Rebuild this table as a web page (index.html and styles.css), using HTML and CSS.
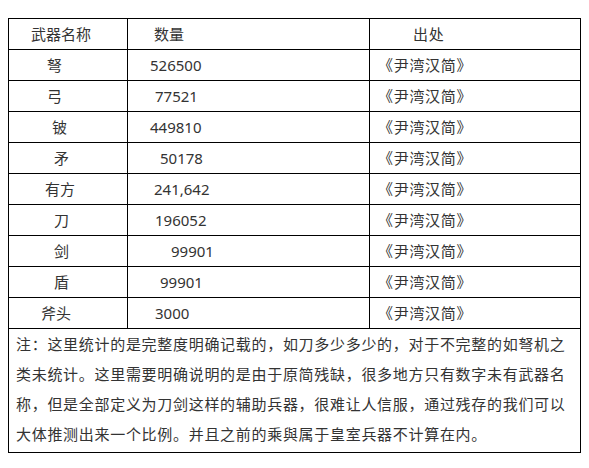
FILE: index.html
```html
<!DOCTYPE html>
<html lang="zh-CN">
<head>
<meta charset="utf-8">
<link rel="stylesheet" href="styles.css">
</head>
<body>
<div class="sheet">
  <div class="cell c1 p22">武器名称</div>
  <div class="cell c2 p26">数量</div>
  <div class="cell c3 h">出处</div>

  <div class="cell c1 p38">弩</div>
  <div class="cell c2 num p22">526500</div>
  <div class="cell c3">《尹湾汉简》</div>

  <div class="cell c1 p38">弓</div>
  <div class="cell c2 num p27">77521</div>
  <div class="cell c3">《尹湾汉简》</div>

  <div class="cell c1 p43">铍</div>
  <div class="cell c2 num p22">449810</div>
  <div class="cell c3">《尹湾汉简》</div>

  <div class="cell c1 p45">矛</div>
  <div class="cell c2 num p32">50178</div>
  <div class="cell c3">《尹湾汉简》</div>

  <div class="cell c1 p36">有方</div>
  <div class="cell c2 num p26">241,642</div>
  <div class="cell c3">《尹湾汉简》</div>

  <div class="cell c1 p45">刀</div>
  <div class="cell c2 num p27">196052</div>
  <div class="cell c3">《尹湾汉简》</div>

  <div class="cell c1 p45">剑</div>
  <div class="cell c2 num p43">99901</div>
  <div class="cell c3">《尹湾汉简》</div>

  <div class="cell c1 p45">盾</div>
  <div class="cell c2 num p32">99901</div>
  <div class="cell c3">《尹湾汉简》</div>

  <div class="cell c1 p32">斧头</div>
  <div class="cell c2 num p27">3000</div>
  <div class="cell c3">《尹湾汉简》</div>

  <div class="note">
    <div class="note-line">注：这里统计的是完整度明确记载的，如刀多少多少的，对于不完整的如弩机之</div>
    <div class="note-line">类未统计。这里需要明确说明的是由于原简残缺，很多地方只有数字未有武器名</div>
    <div class="note-line">称，但是全部定义为刀剑这样的辅助兵器，很难让人信服，通过残存的我们可以</div>
    <div class="note-line">大体推测出来一个比例。并且之前的乘與属于皇室兵器不计算在内。</div>
  </div>
</div>
</body>
</html>
```

FILE: styles.css
```css
html, body {
  margin: 0;
  padding: 0;
  background: #ffffff;
}

body {
  padding: 18px 0 0 8px;
  font-family: "Noto Sans CJK SC", "Noto Sans", sans-serif;
  font-size: 15px;
  color: #333333;
  text-spacing-trim: space-all;
  font-feature-settings: "chws" 0, "halt" 0, "palt" 0;
}

.sheet {
  display: grid;
  grid-template-columns: 118px 241px 210px;
  grid-auto-rows: 30px;
  gap: 1px;
  padding: 1px;
  width: 571px;
  background: #000000;
}

.cell {
  background: #ffffff;
  line-height: 30px;
  white-space: nowrap;
  overflow: hidden;
}

.num {
  font-family: "Noto Sans", "Noto Sans CJK SC", sans-serif;
}

.c3 {
  padding-left: 8px;
  letter-spacing: 0.7px;
}

.c3.h {
  padding-left: 43px;
}

.p22 { padding-left: 22px; }
.p26 { padding-left: 26px; }
.p27 { padding-left: 27px; }
.p32 { padding-left: 32px; }
.p36 { padding-left: 36px; }
.p38 { padding-left: 38px; }
.p43 { padding-left: 43px; }
.p45 { padding-left: 45px; }

.note {
  grid-column: 1 / -1;
  grid-row: span 4;
  display: flex;
  flex-direction: column;
  background: #ffffff;
  padding: 0 7px;
}

.note-line {
  line-height: 30px;
  white-space: nowrap;
  letter-spacing: 0.7px;
}
```
